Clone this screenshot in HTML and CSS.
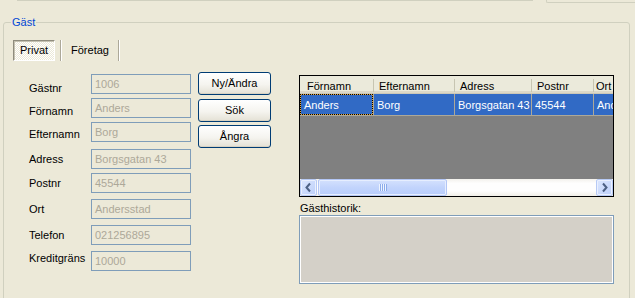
FILE: index.html
```html
<!DOCTYPE html>
<html>
<head>
<meta charset="utf-8">
<link rel="stylesheet" href="styles.css">
</head>
<body>
<div class="topstrip"><div class="ts-left"></div><div class="ts-right"></div></div>
<div class="group">
  <span class="group-title">Gäst</span>
  <div class="tabs">
    <div class="tab active">Privat</div>
    <div class="tab-sep first"></div>
    <div class="tab plain">Företag</div>
    <div class="tab-sep"></div>
  </div>
  <div class="content">
    <div class="form">
      <div class="row"><span class="lbl d4">Gästnr</span><div class="tb">1006</div></div>
      <div class="row"><span class="lbl d3">Förnamn</span><div class="tb">Anders</div></div>
      <div class="row"><span class="lbl d2">Efternamn</span><div class="tb">Borg</div></div>
      <div class="row g7"><span class="lbl">Adress</span><div class="tb">Borgsgatan 43</div></div>
      <div class="row"><span class="lbl">Postnr</span><div class="tb">45544</div></div>
      <div class="row g6"><span class="lbl">Ort</span><div class="tb">Andersstad</div></div>
      <div class="row g6"><span class="lbl">Telefon</span><div class="tb">021256895</div></div>
      <div class="row g6"><span class="lbl u3">Kreditgräns</span><div class="tb">10000</div></div>
    </div>
    <div class="buttons">
      <button class="btn">Ny/Ändra</button>
      <button class="btn">Sök</button>
      <button class="btn g3">Ångra</button>
    </div>
    <div class="right">
      <div class="grid">
        <div class="gh">
          <div class="c1">Förnamn</div>
          <div class="c2">Efternamn</div>
          <div class="c3">Adress</div>
          <div class="c4">Postnr</div>
          <div class="c5">Ort</div>
        </div>
        <div class="gr">
          <div class="c1 focus">Anders</div>
          <div class="c2">Borg</div>
          <div class="c3">Borgsgatan 43</div>
          <div class="c4">45544</div>
          <div class="c5">Andersstad</div>
        </div>
        <div class="gempty"></div>
        <div class="hscroll">
          <div class="sb-btn"><svg width="15" height="15" viewBox="0 0 15 15"><polyline points="9,3.5 5.5,7.5 9,11.5" fill="none" stroke="#4d6185" stroke-width="2"/></svg></div>
          <div class="thumb"><span class="grip"></span></div>
          <div class="sb-btn right-btn"><svg width="15" height="15" viewBox="0 0 15 15"><polyline points="6,3.5 9.5,7.5 6,11.5" fill="none" stroke="#4d6185" stroke-width="2"/></svg></div>
        </div>
      </div>
      <div class="hist-label">Gästhistorik:</div>
      <div class="hist"></div>
    </div>
  </div>
</div>
</body>
</html>
```
FILE: styles.css
```css
* { box-sizing: border-box; }
html, body { margin: 0; padding: 0; }
body {
  width: 635px;
  height: 298px;
  overflow: hidden;
  background: #ece9d8;
  font-family: "Liberation Sans", Arial, sans-serif;
  font-size: 11px;
  line-height: 13px;
  color: #000;
}
.topstrip { display: flex; height: 3px; }
.ts-left {
  margin-left: 17px;
  width: 516px;
  height: 1px;
  border-bottom: 1px solid #d0d0bf;
}
.ts-right {
  margin-left: 13px;
  flex: 1;
  height: 3px;
  border-left: 1px solid #d0d0bf;
  border-bottom: 1px solid #d0d0bf;
  border-bottom-left-radius: 2px;
}
.group {
  position: relative;
  margin: 19px 0 0 3px;
  width: 627px;
  height: 290px;
  border: 1px solid #d0d0bf;
  border-radius: 3px;
}
.group-title {
  position: absolute;
  top: -7px;
  left: 7px;
  padding: 0 1px;
  background: #ece9d8;
  color: #0046d5;
}
.tabs { display: flex; margin: 17px 0 0 9px; height: 21px; }
.tab { height: 21px; line-height: 21px; text-align: center; }
.tab.active {
  width: 42px;
  line-height: 19px;
  border: 1px solid;
  border-color: #8f8c7e #fff #fff #8f8c7e;
  box-shadow: inset 1px 1px 0 #c5c2b2;
  background: repeating-conic-gradient(#fff 0 25%, #ece9d8 0 50%) 0 0 / 2px 2px;
}
.tab.plain { width: 56px; }
.tab-sep {
  width: 2px;
  height: 21px;
  border-left: 1px solid #aca899;
  border-right: 1px solid #fff;
}
.tab-sep.first { margin-left: 5px; }

.content { display: flex; align-items: flex-start; margin-top: 11px; }
.form { margin-left: 25px; padding-top: 2px; width: 162px; flex: none; }
.row { display: flex; align-items: flex-start; height: 20px; margin-top: 4px; }
.row:first-child { margin-top: 0; }
.row.g7 { margin-top: 7px; }
.row.g6 { margin-top: 6px; }
.lbl { width: 62px; flex: none; line-height: 20px; }
.lbl.d4 { padding-top: 4px; }
.lbl.d3 { padding-top: 3px; }
.lbl.d2 { padding-top: 2px; }
.lbl.u3 { margin-top: -3px; }
.tb {
  width: 100px;
  height: 20px;
  flex: none;
  border: 1px solid #7f9db9;
  padding-left: 3px;
  line-height: 18px;
  color: #aca899;
}
.buttons { display: flex; flex-direction: column; margin-left: 7px; flex: none; }
.btn {
  width: 73px;
  height: 23px;
  border: 1px solid #003c74;
  border-radius: 3px;
  background: linear-gradient(#ffffff, #f5f4ef 55%, #e4e1d5);
  box-shadow: inset 0 -1px 0 #d8d2c2;
  font: inherit;
  line-height: 21px;
  text-align: center;
  padding: 0;
  color: #000;
}
.btn + .btn { margin-top: 4px; }
.btn.g3 { margin-top: 3px; }

.right { margin-left: 28px; padding-top: 3px; width: 315px; flex: none; }
.grid {
  border: 1px solid #000;
  height: 122px;
  display: flex;
  flex-direction: column;
  overflow: hidden;
}
.gh, .gr { display: flex; flex: none; white-space: nowrap; overflow: hidden; }
.gh {
  height: 18px;
  background: #ebeadb;
  border-bottom: 1px solid #cbc7b8;
  box-shadow: inset 0 -2px 0 #dcd8c8;
}
.gh > div {
  flex: none;
  padding: 4px 0 0 6px;
  line-height: 13px;
  background: linear-gradient(#c7c5b2, #c7c5b2) left 0 top 3px / 1px 13px no-repeat;
}
.gh > .c1 { padding-left: 7px; background: none; }
.gh > .c5 { padding-left: 3px; }
.gr {
  height: 22px;
  background: #316ac5;
  color: #fff;
  border-bottom: 1px solid #aca899;
}
.gr > div {
  flex: none;
  padding: 2px 0 0 3px;
  line-height: 19px;
  border-left: 1px solid #aca899;
}
.gr > .c1 { border-left: none; padding-left: 4px; }
.gr > .focus {
  outline: 1px dotted #000;
  outline-offset: -1px;
  box-shadow: inset 0 0 0 1px #e2a53c;
}
.c1 { width: 73px; }
.c2 { width: 81px; }
.c3 { width: 77px; }
.c4 { width: 62px; }
.c5 { width: 60px; }
.gempty { flex: 1; background: #808080; }
.hscroll {
  height: 17px;
  flex: none;
  display: flex;
  background: linear-gradient(#f3f1ec, #fefefe 25%, #fefefe 70%, #f1efe8);
}
.sb-btn {
  width: 17px;
  height: 17px;
  flex: none;
  border: 1px solid #b7caf5;
  border-radius: 2px;
  background: linear-gradient(135deg, #dce7fe, #bccffa);
  box-shadow: inset 0 0 0 1px #eaf0fe;
}
.sb-btn svg { display: block; }
.right-btn { margin-left: auto; }
.thumb {
  margin-left: 1px;
  width: 129px;
  height: 17px;
  flex: none;
  border: 1px solid #b3c6f5;
  border-radius: 2px;
  background: linear-gradient(#d4e1fd, #c2d4fc 50%, #b8cdfb);
  box-shadow: inset 0 0 0 1px #e6eefe;
  display: flex;
  align-items: center;
  justify-content: center;
}
.grip {
  width: 8px;
  height: 7px;
  background: repeating-linear-gradient(to right, #eef4fe 0 1px, #8cabeb 1px 2px);
}
.hist-label { margin-top: 5px; padding-left: 1px; line-height: 13px; }
.hist {
  height: 69px;
  border: 1px solid #7f9db9;
  box-shadow: inset 0 0 0 1px #fff;
  background: #d4d0c8;
}
```
